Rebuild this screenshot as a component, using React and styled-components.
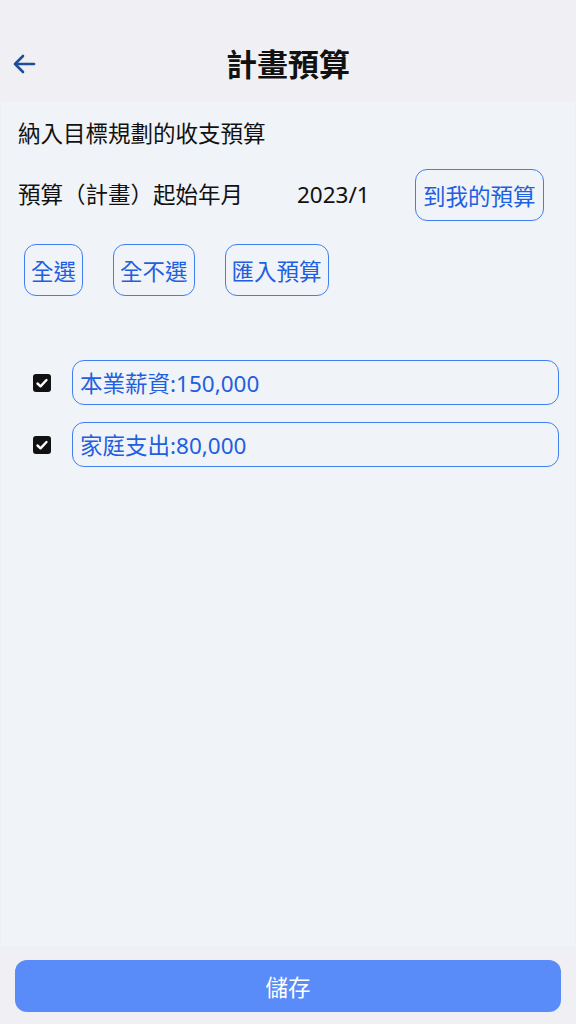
import React, { useState } from 'react';
import styled, { createGlobalStyle } from 'styled-components';

const GlobalStyle = createGlobalStyle`
  html, body {
    margin: 0;
    padding: 0;
    background: #efeff4;
  }
  body {
    font-family: 'Noto Sans', 'Noto Sans CJK TC', sans-serif;
    color: #111;
  }
  * {
    box-sizing: border-box;
  }
`;

const Page = styled.div`
  display: flex;
  flex-direction: column;
  height: 1024px;
  background: #efeff4;
`;

const Header = styled.div`
  height: 102px;
  display: grid;
  grid-template-columns: 60px 1fr 60px;
  align-items: center;
  padding-top: 26px;
`;

const BackButton = styled.button`
  border: none;
  background: none;
  padding: 0 0 0 12px;
  display: flex;
  align-items: center;
  cursor: pointer;
  color: #1d4e9c;
`;

const Title = styled.h1`
  margin: 0;
  text-align: center;
  font-size: 31px;
  font-weight: 700;
  line-height: 40px;
  color: #111;
`;

const Panel = styled.div`
  flex: 1;
  margin: 0 1px;
  background: #f0f3f7;
  padding: 16px 16px 0 17px;
`;

const Heading = styled.div`
  font-size: 22.5px;
  line-height: 32px;
`;

const StartRow = styled.div`
  display: flex;
  align-items: center;
  margin-top: 19px;
`;

const Label = styled.span`
  font-size: 22.5px;
  line-height: 32px;
  width: 279px;
  white-space: nowrap;
`;

const Value = styled.span`
  font-size: 22.5px;
  line-height: 32px;
  width: 118px;
`;

const OutlineButton = styled.button`
  height: 52px;
  padding: 0 ${props => (props.wide ? 7 : 6)}px;
  border: 1px solid #3f7ff0;
  border-radius: 12px;
  background: transparent;
  color: #1f5fe0;
  font-family: inherit;
  font-size: 22.5px;
  cursor: pointer;
`;

const ActionRow = styled.div`
  display: flex;
  gap: 30px;
  margin-top: 23px;
  padding-left: 6px;
`;

const ItemList = styled.div`
  display: flex;
  flex-direction: column;
  gap: 17px;
  margin-top: 64px;
  padding-left: 15px;
`;

const ItemRow = styled.label`
  display: flex;
  align-items: center;
  gap: 21px;
  cursor: pointer;
`;

const CheckBox = styled.span`
  width: 18px;
  height: 18px;
  flex: 0 0 18px;
  border-radius: 3px;
  background: ${props => (props.checked ? '#111' : 'transparent')};
  border: ${props => (props.checked ? 'none' : '2px solid #111')};
  display: flex;
  align-items: center;
  justify-content: center;
`;

const ItemField = styled.div`
  flex: 1;
  height: 45px;
  border: 1px solid #3f7ff0;
  border-radius: 12px;
  padding: 0 7px;
  display: flex;
  align-items: center;
  font-size: 22.5px;
  color: #1f5fe0;
`;

const Footer = styled.div`
  padding: 13px 15px 12px;
`;

const SaveButton = styled.button`
  width: 100%;
  height: 52px;
  border: none;
  border-radius: 12px;
  background: #598cf9;
  color: #fff;
  font-family: inherit;
  font-size: 22.5px;
  cursor: pointer;
`;

const items = [
  { id: 1, name: '本業薪資', amount: '150,000' },
  { id: 2, name: '家庭支出', amount: '80,000' },
];

function App() {
  const [checked, setChecked] = useState({ 1: true, 2: true });

  const toggle = id => setChecked(prev => ({ ...prev, [id]: !prev[id] }));

  return (
    <Page>
      <GlobalStyle />
      <Header>
        <BackButton aria-label="back">
          <svg width="24" height="24" viewBox="0 0 24 24" fill="none" stroke="currentColor" strokeWidth="2.6" strokeLinecap="round" strokeLinejoin="round">
            <path d="M22 12H4" />
            <path d="M11 4l-8 8 8 8" />
          </svg>
        </BackButton>
        <Title>計畫預算</Title>
        <span />
      </Header>

      <Panel>
        <Heading>納入目標規劃的收支預算</Heading>
        <StartRow>
          <Label>預算（計畫）起始年月</Label>
          <Value>2023/1</Value>
          <OutlineButton wide>到我的預算</OutlineButton>
        </StartRow>

        <ActionRow>
          <OutlineButton onClick={() => setChecked({ 1: true, 2: true })}>全選</OutlineButton>
          <OutlineButton onClick={() => setChecked({ 1: false, 2: false })}>全不選</OutlineButton>
          <OutlineButton>匯入預算</OutlineButton>
        </ActionRow>

        <ItemList>
          {items.map(item => (
            <ItemRow key={item.id} onClick={() => toggle(item.id)}>
              <CheckBox checked={checked[item.id]}>
                {checked[item.id] && (
                  <svg width="14" height="14" viewBox="0 0 14 14" fill="none" stroke="#fff" strokeWidth="2.4" strokeLinecap="round" strokeLinejoin="round">
                    <path d="M2.5 7.5l3 2.8L11.5 4" />
                  </svg>
                )}
              </CheckBox>
              <ItemField>{item.name}:{item.amount}</ItemField>
            </ItemRow>
          ))}
        </ItemList>
      </Panel>

      <Footer>
        <SaveButton>儲存</SaveButton>
      </Footer>
    </Page>
  );
}

export default App;
